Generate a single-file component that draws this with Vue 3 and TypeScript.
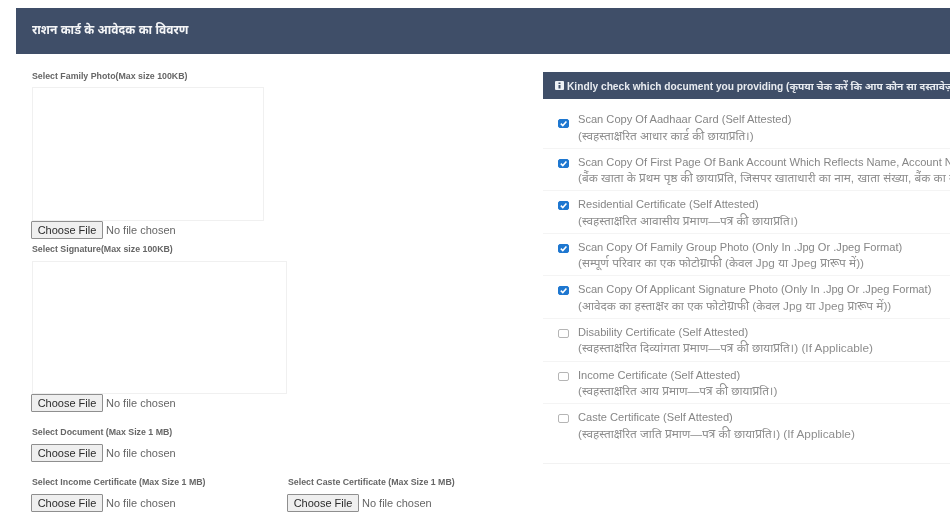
<template>
  <div class="page">
    <div class="title-bar">राशन कार्ड के आवेदक का विवरण</div>

    <div class="columns">
      <div class="uploads">
        <label class="field-label">Select Family Photo(Max size 100KB)</label>
        <div class="preview family"></div>
        <div class="file-row">
          <button type="button" class="file-btn">Choose File</button>
          <span class="file-name">No file chosen</span>
        </div>

        <label class="field-label signature">Select Signature(Max size 100KB)</label>
        <div class="preview sign"></div>
        <div class="file-row">
          <button type="button" class="file-btn">Choose File</button>
          <span class="file-name">No file chosen</span>
        </div>

        <label class="field-label doc">Select Document (Max Size 1 MB)</label>
        <div class="file-row tight">
          <button type="button" class="file-btn">Choose File</button>
          <span class="file-name">No file chosen</span>
        </div>

        <div class="two-up">
          <div v-for="name in certUploads" :key="name">
            <label class="field-label">{{ name }}</label>
            <div class="file-row tight">
              <button type="button" class="file-btn">Choose File</button>
              <span class="file-name">No file chosen</span>
            </div>
          </div>
        </div>
      </div>

      <div class="panel">
        <div class="panel-head">
          <svg class="head-icon" width="9" height="9" viewBox="0 0 9 9">
            <rect width="9" height="9" rx="1" fill="#eef1f5" />
            <rect x="3.5" y="1.5" width="2" height="1.5" fill="#3f4e68" />
            <rect x="3.5" y="4" width="2" height="3.5" fill="#3f4e68" />
          </svg>
          <span>Kindly check which document you providing (कृपया चेक करें कि आप कौन सा दस्तावेज़ प्रदान कर रहे हैं)</span>
        </div>
        <ul class="doc-list">
          <li v-for="doc in documents" :key="doc.en" class="doc-row">
            <span class="check" :class="{ on: doc.checked }">
              <svg v-if="doc.checked" width="11" height="9" viewBox="0 0 11 9">
                <path d="M2.8 4.6 4.8 6.6 8.4 2.4" fill="none" stroke="#fff" stroke-width="1.5" />
              </svg>
            </span>
            <div class="doc-text">
              <div>{{ doc.en }}</div>
              <div class="hi">{{ doc.hi }}</div>
            </div>
          </li>
        </ul>
      </div>
    </div>
  </div>
</template>

<script setup lang="ts">
interface DocItem {
  en: string
  hi: string
  checked: boolean
}

const certUploads: string[] = [
  'Select Income Certificate (Max Size 1 MB)',
  'Select Caste Certificate (Max Size 1 MB)',
]

const documents: DocItem[] = [
  {
    en: 'Scan Copy Of Aadhaar Card (Self Attested)',
    hi: '(स्वहस्ताक्षरित आधार कार्ड की छायाप्रति।)',
    checked: true,
  },
  {
    en: 'Scan Copy Of First Page Of Bank Account Which Reflects Name, Account Number, IFSC Code',
    hi: '(बैंक खाता के प्रथम पृष्ठ की छायाप्रति, जिसपर खाताधारी का नाम, खाता संख्या, बैंक का नाम अंकित हो।)',
    checked: true,
  },
  {
    en: 'Residential Certificate (Self Attested)',
    hi: '(स्वहस्ताक्षरित आवासीय प्रमाण—पत्र की छायाप्रति।)',
    checked: true,
  },
  {
    en: 'Scan Copy Of Family Group Photo (Only In .Jpg Or .Jpeg Format)',
    hi: '(सम्पूर्ण परिवार का एक फोटोग्राफी (केवल Jpg या Jpeg प्रारूप में))',
    checked: true,
  },
  {
    en: 'Scan Copy Of Applicant Signature Photo (Only In .Jpg Or .Jpeg Format)',
    hi: '(आवेदक का हस्ताक्षर का एक फोटोग्राफी (केवल Jpg या Jpeg प्रारूप में))',
    checked: true,
  },
  {
    en: 'Disability Certificate (Self Attested)',
    hi: '(स्वहस्ताक्षरित दिव्यांगता प्रमाण—पत्र की छायाप्रति।) (If Applicable)',
    checked: false,
  },
  {
    en: 'Income Certificate (Self Attested)',
    hi: '(स्वहस्ताक्षरित आय प्रमाण—पत्र की छायाप्रति।)',
    checked: false,
  },
  {
    en: 'Caste Certificate (Self Attested)',
    hi: '(स्वहस्ताक्षरित जाति प्रमाण—पत्र की छायाप्रति।) (If Applicable)',
    checked: false,
  },
]
</script>

<style>
html,
body {
  margin: 0;
  overflow: hidden;
  background: #fff;
}
</style>

<style scoped>
.page {
  width: 950px;
  height: 526px;
  padding-top: 8px;
  box-sizing: border-box;
  overflow: hidden;
  font-family: "Liberation Sans", "Noto Sans", sans-serif;
  filter: blur(0.6px);
}

.title-bar {
  margin-left: 16px;
  height: 46px;
  line-height: 44px;
  padding-left: 16px;
  background: #3f4e68;
  color: #f4f5f7;
  font-size: 12px;
  font-weight: 700;
}

.columns {
  display: flex;
  padding: 17px 0 0 32px;
}

.uploads {
  width: 511px;
  flex: none;
}

.field-label {
  display: block;
  font-size: 8.8px;
  line-height: 10px;
  font-weight: 700;
  color: #666;
  white-space: nowrap;
}

.preview {
  margin-top: 6px;
  border: 1px solid #f0f0f0;
  box-sizing: border-box;
}

.preview.family {
  width: 232px;
  height: 134px;
}

.preview.sign {
  width: 255px;
  height: 133px;
  margin-top: 7px;
}

.file-row {
  display: flex;
  align-items: center;
  gap: 3px;
}

.file-row.tight {
  margin-top: 7px;
}

.file-btn {
  width: 72px;
  height: 18px;
  margin-left: -1px;
  padding: 0;
  border: 1px solid #8f8f8f;
  border-radius: 1px;
  background: #efefef;
  color: #2b2b2b;
  font-family: inherit;
  font-size: 11px;
  font-weight: 400;
}

.file-name {
  font-size: 11px;
  color: #666;
}

.field-label.signature {
  margin-top: 5px;
}

.field-label.doc {
  margin-top: 15px;
}

.two-up {
  display: grid;
  grid-template-columns: 256px 1fr;
  margin-top: 15px;
}

.panel {
  width: 420px;
  flex: none;
  height: 391px;
  margin-top: 1px;
  border-bottom: 1px solid #f2f2f2;
  overflow: hidden;
}

.panel-head {
  display: flex;
  align-items: center;
  gap: 3px;
  height: 27px;
  padding-left: 12px;
  background: #3f4e68;
  color: #e8ebf0;
  font-size: 10.2px;
  font-weight: 700;
  white-space: nowrap;
}

.head-icon {
  flex: none;
}

.doc-list {
  list-style: none;
  margin: 0;
  padding: 7px 0 0;
}

.doc-row {
  display: flex;
  align-items: flex-start;
  height: 42.6px;
  padding: 5px 0 0 15px;
  box-sizing: border-box;
  border-bottom: 1px solid #f4f4f4;
}

.doc-row:last-child {
  border-bottom: none;
}

.check {
  flex: none;
  width: 11px;
  height: 9px;
  margin: 5px 9px 0 0;
  border: 1px solid #b5b5b5;
  border-radius: 2px;
  box-sizing: border-box;
  display: flex;
  align-items: center;
  justify-content: center;
}

.doc-row:first-child .check {
  margin-top: 8px;
}

.check.on {
  background: #1e77d0;
  border-color: #1e77d0;
}

.check svg {
  flex: none;
}

.doc-text {
  font-size: 11.1px;
  line-height: 16.5px;
  color: #868686;
  white-space: nowrap;
}

.doc-text .hi {
  font-size: 11.8px;
  color: #8e8e8e;
}
</style>
